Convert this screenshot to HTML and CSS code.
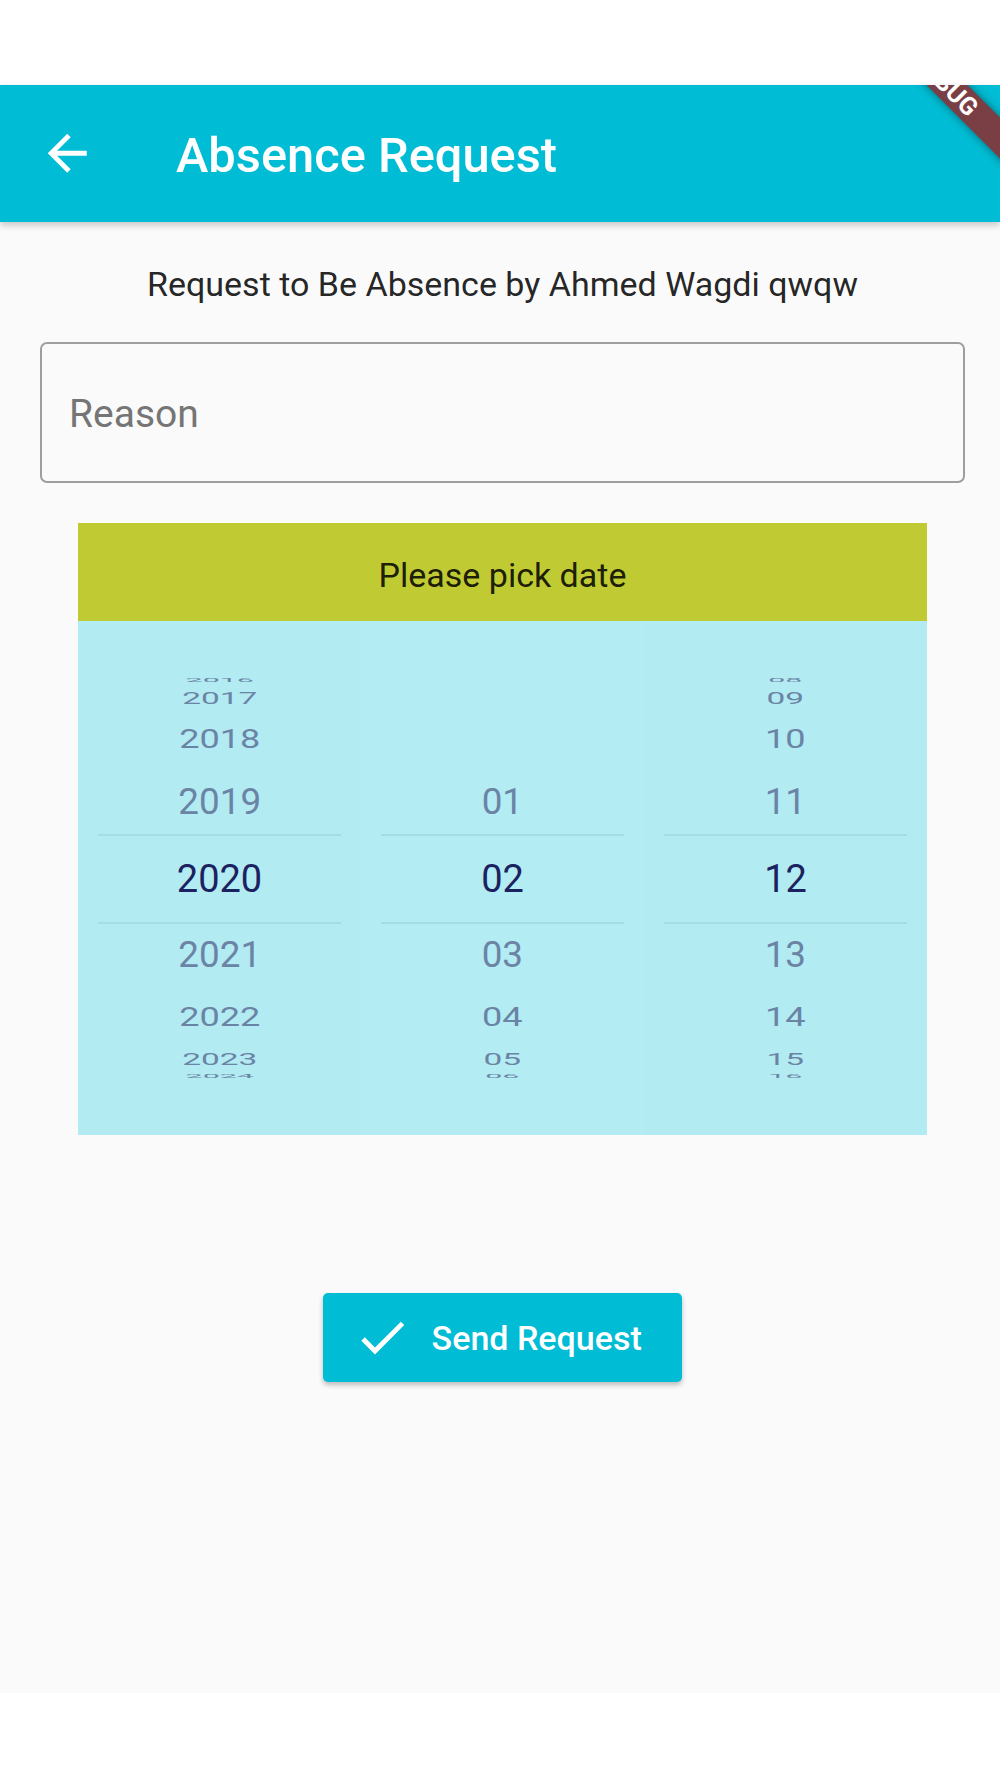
FILE: index.html
```html
<!DOCTYPE html>
<html lang="en">
<head>
<meta charset="utf-8">
<title>Absence Request</title>
<link rel="stylesheet" href="styles.css">
</head>
<body>
<div class="screen">
  <div class="status"></div>
  <header class="appbar">
    <svg class="back" viewBox="0 0 24 24" aria-hidden="true"><path d="M20 11H7.83l5.59-5.59L12 4l-8 8 8 8 1.41-1.41L7.83 13H20v-2z"/></svg>
    <h1 class="title">Absence Request</h1>
    <div class="banner"><span>DEBUG</span></div>
  </header>
  <main class="content">
    <p class="subtitle">Request to Be Absence by Ahmed Wagdi qwqw</p>
    <div class="field"><span class="hint">Reason</span></div>
    <section class="picker">
      <div class="picker-head"><span>Please pick date</span></div>
      <div class="picker-body">
        <div class="wheel">
          <div class="sel"></div>
          <span class="item km4">2016</span>
          <span class="item km3">2017</span>
          <span class="item km2">2018</span>
          <span class="item km1">2019</span>
          <span class="item k0">2020</span>
          <span class="item kp1">2021</span>
          <span class="item kp2">2022</span>
          <span class="item kp3">2023</span>
          <span class="item kp4">2024</span>
        </div>
        <div class="wheel mid">
          <div class="sel"></div>
          <span class="item km1">01</span>
          <span class="item k0">02</span>
          <span class="item kp1">03</span>
          <span class="item kp2">04</span>
          <span class="item kp3">05</span>
          <span class="item kp4">06</span>
        </div>
        <div class="wheel">
          <div class="sel"></div>
          <span class="item km4">08</span>
          <span class="item km3">09</span>
          <span class="item km2">10</span>
          <span class="item km1">11</span>
          <span class="item k0">12</span>
          <span class="item kp1">13</span>
          <span class="item kp2">14</span>
          <span class="item kp3">15</span>
          <span class="item kp4">16</span>
        </div>
      </div>
    </section>
    <button class="send" type="button">
      <svg viewBox="0 0 24 24" aria-hidden="true"><path d="M9 16.17L4.83 12l-1.42 1.41L9 19 21 7l-1.41-1.41z"/></svg>
      <span>Send Request</span>
    </button>
  </main>
</div>
</body>
</html>
```

FILE: styles.css
```css
html, body {
  margin: 0;
  padding: 0;
  background: #ffffff;
  font-family: Roboto, "Noto Sans", "Liberation Sans", sans-serif;
}

.screen {
  width: 1000px;
}

.status {
  height: 85px;
  background: #ffffff;
}

.appbar {
  position: relative;
  z-index: 2;
  height: 137px;
  box-sizing: border-box;
  background: #00bcd4;
  display: flex;
  align-items: center;
  padding-left: 38px;
  overflow: hidden;
  box-shadow: 0 3px 7px rgba(0, 0, 0, 0.22);
}

.back {
  width: 58.5px;
  height: 58.5px;
  fill: #ffffff;
  flex: none;
}

.title {
  margin: 6px 0 0 79.5px;
  font-size: 48.8px;
  font-weight: 500;
  line-height: 1;
  color: #ffffff;
}

.banner {
  position: absolute;
  left: 848px;
  top: -16px;
  width: 195px;
  height: 29px;
  background: #7a3f45;
  transform: rotate(45deg);
  display: flex;
  align-items: center;
  justify-content: center;
  color: #ffffff;
  font-weight: 700;
  font-size: 25px;
  line-height: 1;
  box-shadow: 0 0 8px rgba(0, 0, 0, 0.45);
}

.content {
  height: 1471px;
  box-sizing: border-box;
  background: #fafafa;
  padding: 0 35px 0 40px;
  display: flex;
  flex-direction: column;
  align-items: center;
}

.subtitle {
  margin: 41.5px 0 0;
  font-size: 34px;
  line-height: 40px;
  color: rgba(0, 0, 0, 0.87);
}

.field {
  margin-top: 38.5px;
  align-self: stretch;
  height: 141px;
  box-sizing: border-box;
  border: 2px solid #9e9e9e;
  border-radius: 7px;
  display: flex;
  align-items: center;
  padding-left: 27px;
}

.hint {
  margin-top: 3px;
  font-size: 39px;
  line-height: 1;
  color: #757575;
}

.picker {
  margin-top: 40px;
  width: 849px;
}

.picker-head {
  height: 98px;
  box-sizing: border-box;
  padding-top: 5px;
  background: #c0ca33;
  display: flex;
  align-items: center;
  justify-content: center;
  font-size: 34px;
  line-height: 1;
  color: rgba(0, 0, 0, 0.87);
}

.picker-body {
  height: 514px;
  background: #b2ebf2;
  display: grid;
  grid-template-columns: repeat(3, 1fr);
}

.wheel {
  display: grid;
  place-items: center;
  overflow: hidden;
}

.wheel.mid {
  background: #b3ecf3;
}

.wheel > * {
  grid-area: 1 / 1;
}

.sel {
  justify-self: stretch;
  margin: 2px 20px 0;
  height: 86px;
  border-top: 2px solid #a6dce3;
  border-bottom: 2px solid #a6dce3;
}

.item {
  font-size: 38px;
  line-height: 1;
  color: #6b84a5;
}

.k0 {
  color: #1c2260;
  transform: translateY(1px);
}

.km1 { transform: translateY(-76.5px) scale(0.97, 0.97); }
.kp1 { transform: translateY(76px) scale(0.97, 0.97); }
.km2 { transform: translateY(-139px) scale(0.95, 0.69); }
.kp2 { transform: translateY(139.5px) scale(0.95, 0.69); }
.km3 { transform: translateY(-180px) scale(0.88, 0.43); }
.kp3 { transform: translateY(181px) scale(0.88, 0.43); }
.km4 { transform: translateY(-197.5px) scale(0.8, 0.12); }
.kp4 { transform: translateY(198.5px) scale(0.8, 0.12); }

.send {
  margin-top: 158px;
  width: 359px;
  height: 89px;
  box-sizing: border-box;
  border: 0;
  border-radius: 5px;
  background: #00bcd4;
  color: #ffffff;
  display: flex;
  align-items: center;
  gap: 20px;
  padding: 0 0 0 30px;
  font-family: Roboto, "Noto Sans", "Liberation Sans", sans-serif;
  font-weight: 500;
  font-size: 34px;
  line-height: 1;
  box-shadow: 0 3px 5px rgba(0, 0, 0, 0.25);
}

.send svg {
  width: 58.6px;
  height: 58.6px;
  fill: #ffffff;
  flex: none;
}
```
